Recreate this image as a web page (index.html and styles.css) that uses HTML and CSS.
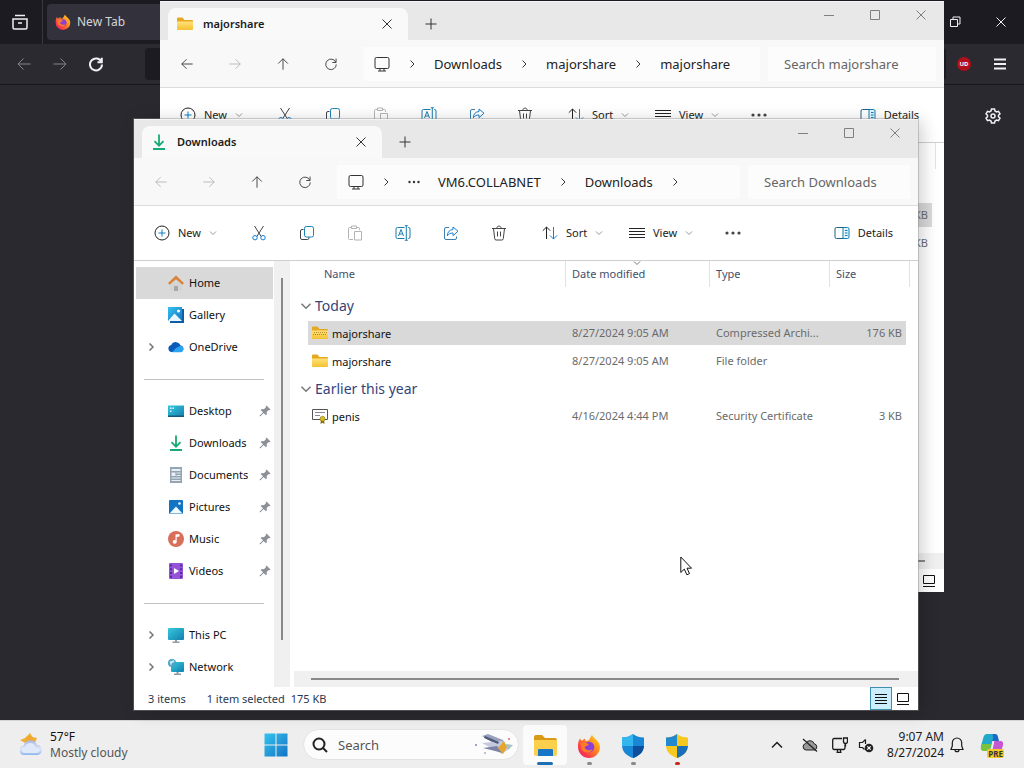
FILE: index.html
```html
<!DOCTYPE html>
<html lang="en">
<head>
<meta charset="utf-8">
<title>Downloads</title>
<link rel="stylesheet" href="styles.css">
</head>
<body>
<svg class="defs" aria-hidden="true">
  <defs>
    <linearGradient id="gFolder" x1="0" y1="0" x2="0" y2="1"><stop offset="0" stop-color="#ffe27a"/><stop offset="1" stop-color="#f5c132"/></linearGradient>
    <linearGradient id="gBlue" x1="0" y1="0" x2="1" y2="1"><stop offset="0" stop-color="#35c3ee"/><stop offset="1" stop-color="#1473c4"/></linearGradient>
    <linearGradient id="gScreen" x1="0" y1="0" x2="1" y2="1"><stop offset="0" stop-color="#37c8dd"/><stop offset="1" stop-color="#117fae"/></linearGradient>
    <linearGradient id="gFox" x1="1" y1="0" x2="0" y2="1"><stop offset="0" stop-color="#ffe226"/><stop offset=".4" stop-color="#ff8a1e"/><stop offset=".75" stop-color="#fb3a4b"/><stop offset="1" stop-color="#e31587"/></linearGradient>
    <linearGradient id="gCloud" x1="0" y1="0" x2="0" y2="1"><stop offset="0" stop-color="#a9b5dc"/><stop offset=".6" stop-color="#dce8fb"/><stop offset="1" stop-color="#8eb4ea"/></linearGradient>
  </defs>
  <symbol id="back" viewBox="0 0 16 16"><path d="M14.500 8H2M7.500 2.500 2 8l5.500 5.500"/></symbol>
  <symbol id="fwd" viewBox="0 0 16 16"><path d="M1.500 8H14M8.500 2.500 14 8l-5.500 5.500"/></symbol>
  <symbol id="up" viewBox="0 0 16 16"><path d="M8 14.500V2M2.500 7.500 8 2l5.500 5.500"/></symbol>
  <symbol id="reload" viewBox="0 0 16 16"><path d="M13.500 6A6 6 0 1 0 14 8.500M13.800 1.800v4.500H9.500"/></symbol>
  <symbol id="pc" viewBox="0 0 16 16"><path d="M2.500 1.500h11a1.500 1.500 0 0 1 1.500 1.500v8a1.500 1.500 0 0 1-1.500 1.500h-11A1.500 1.500 0 0 1 1 11V3a1.500 1.500 0 0 1 1.500-1.500zM6 12.500V15M10 12.500V15M4 15h8"/></symbol>
  <symbol id="right" viewBox="0 0 8 8"><path d="m2.500.500 3.500 3.500-3.500 3.500"/></symbol>
  <symbol id="down" viewBox="0 0 8 8"><path d="m1 2.500 3 3 3-3"/></symbol>
  <symbol id="dots" viewBox="0 0 16 16"><g fill="currentColor" stroke="none"><circle cx="2" cy="8" r="1.600"/><circle cx="8" cy="8" r="1.600"/><circle cx="14" cy="8" r="1.600"/></g></symbol>
  <symbol id="plus" viewBox="0 0 12 12"><path d="M6 .500v11M.500 6h11"/></symbol>
  <symbol id="close" viewBox="0 0 12 12"><path d="m1.500 1.500 9 9M10.500 1.500l-9 9"/></symbol>
  <symbol id="min" viewBox="0 0 12 12"><path d="M1 6.500h10"/></symbol>
  <symbol id="max" viewBox="0 0 12 12"><path d="M1.500 1.500h9v9h-9z"/></symbol>
  <symbol id="new" viewBox="0 0 16 16"><circle cx="8" cy="8" r="7"/><path stroke="#0f7fc4" d="M8 4.500v7M4.500 8h7"/></symbol>
  <symbol id="cut" viewBox="0 0 16 16"><path d="m3.500 1 6.700 10.500M12.500 1 5.800 11.500"/><g stroke="#0f7fd8"><circle cx="4" cy="12.700" r="2.200"/><circle cx="12" cy="12.700" r="2.200"/></g></symbol>
  <symbol id="copy" viewBox="0 0 16 16"><path d="M4.500 4.500H3A1.500 1.500 0 0 0 1.500 6v7A1.500 1.500 0 0 0 3 14.500h5.500A1.500 1.500 0 0 0 10 13v-1"/><rect x="5.500" y="1.500" width="9" height="10.500" rx="1.800" stroke="#1c84bd"/></symbol>
  <symbol id="paste" viewBox="0 0 16 16"><path d="M6 14.500H2.500a1 1 0 0 1-1-1v-10a1 1 0 0 1 1-1H4M10 2.500h1.500a1 1 0 0 1 1 1V5M4.500 1h5v2.500h-5zM7.500 6.500h7v8.500h-7z"/></symbol>
  <symbol id="rename" viewBox="0 0 16 16"><g stroke="#1a7cae"><path d="M9.500 2.500H2.500A1.500 1.500 0 0 0 1 4v8a1.500 1.500 0 0 0 1.500 1.500h7M13 2.500h.5A1.500 1.500 0 0 1 15 4v8a1.500 1.500 0 0 1-1.500 1.500H13M11.300 1v14M9.800.700h3M9.800 15.300h3"/><path d="m3.500 11 2.500-6.500L8.500 11M4.500 9h3"/></g></symbol>
  <symbol id="share" viewBox="0 0 16 16"><path stroke="#3b7fae" d="M6 2.500H3A1.500 1.500 0 0 0 1.500 4v9A1.500 1.500 0 0 0 3 14.500h9a1.500 1.500 0 0 0 1.500-1.500v-1.500"/><path stroke="#1c7fd0" d="M10 2v2.500C6.500 4.800 4.500 7 4.300 10.800 5.800 8.800 7.500 8 10 8v2.700L15 6.200z"/></symbol>
  <symbol id="trash" viewBox="0 0 16 16"><path d="M1 3.500h14M5.800 3.500C5.800.300 10.200.300 10.200 3.500M2.500 3.500l1.200 10a1.500 1.500 0 0 0 1.500 1.500h5.600a1.500 1.500 0 0 0 1.500-1.500l1.200-10M6.500 6.500v5M9.500 6.500v5"/></symbol>
  <symbol id="sort" viewBox="0 0 16 16"><path d="M4.500 14V2M.800 5.700 4.500 2l3.700 3.700"/><path stroke="#1c7fd0" d="M11.500 2v12M8 10.500l3.500 3.500 3.700-3.700"/></symbol>
  <symbol id="lines" viewBox="0 0 16 16"><path d="M0 3.500h16M0 6.500h16M0 9.500h16M0 12.500h16"/></symbol>
  <symbol id="details" viewBox="0 0 16 16"><path stroke="#22607f" d="M10 2.500H2.500A1.500 1.500 0 0 0 1 4v8a1.500 1.500 0 0 0 1.500 1.500H10"/><path fill="#e5f5fd" stroke="#0f7fb4" d="M9 2.500h4.500A1.500 1.500 0 0 1 15 4v8a1.500 1.500 0 0 1-1.500 1.500H9zM11 5.500h2.500M11 8h2.500M11 10.500h2.500"/></symbol>
  <symbol id="download" viewBox="0 0 16 16"><path stroke="#19a974" stroke-width="1.800" d="M8 .500v11M3.500 7.200 8 11.700l4.500-4.500M2 15h12"/></symbol>
  <symbol id="folder" viewBox="0 0 16 16"><g stroke="none"><path fill="#e5a822" d="M0 2.500a1 1 0 0 1 1-1h4.500L7.500 4H15a1 1 0 0 1 1 1v3H0z"/><path fill="url(#gFolder)" d="M0 5.500h16V13a1 1 0 0 1-1 1H1a1 1 0 0 1-1-1z"/></g></symbol>
  <symbol id="zip" viewBox="0 0 16 16"><use href="#folder"/><path stroke="#b88a2e" stroke-width="1" stroke-dasharray="1 1" d="M2 7.500h14"/><path stroke="#9b8450" stroke-width="1" stroke-dasharray="1 1" d="M1 9.500h14"/></symbol>
  <symbol id="cert" viewBox="0 0 16 16"><path fill="#fff" stroke="#555" d="M.500 1.500h15v10H.500z"/><path stroke="#889" d="M3 4.500h10M3 7.500h5"/><path stroke="none" fill="#7b6a10" d="m9 11-.5 5 2-1.200 2 1.200L12 11z"/><circle cx="10.500" cy="10.800" r="2.500" fill="#d8bd20" stroke="#8a7410" stroke-width=".6"/></symbol>
  <symbol id="home" viewBox="0 0 16 16"><g stroke="none"><path fill="#d4d4d4" d="M2 8.500 8 3.500l6 5V15a1 1 0 0 1-1 1h-3v-5H6v5H3a1 1 0 0 1-1-1z"/><path fill="#a7a7a7" d="M6 11h4v5H6z"/><path fill="#d98338" d="M8 .500 0 8l1.500 1.800L8 4.300l6.500 5.500L16 8z"/></g></symbol>
  <symbol id="gallery" viewBox="0 0 16 16"><g stroke="none"><path fill="#0b5da8" d="M2 2h14v14H2z"/><path fill="url(#gBlue)" d="M0 0h14v14H0z"/><path fill="#e8f6ff" d="m0 14 6.500-7.500L14 14z"/><circle cx="10.500" cy="4" r="1.500" fill="#fff"/></g></symbol>
  <symbol id="onedrive" viewBox="0 0 16 16"><g stroke="none"><path fill="#0a5cb8" d="M3.500 13a3.500 3.500 0 0 1-.3-6.900A5 5 0 0 1 12.500 6.500 3.300 3.300 0 0 1 12.800 13z"/><path fill="#2aa3f0" d="M4 13.200 8 9l4.500-2.300A3.300 3.300 0 0 1 12.800 13.200z"/></g></symbol>
  <symbol id="desktop" viewBox="0 0 16 16"><g stroke="none"><path fill="url(#gScreen)" d="M0 2.500h16v11.500H0z"/><path fill="#e4fbff" d="M2 4.500h1.500V6H2zM2 7.500h1.500V9H2zM4.500 4.500H6V6H4.500z"/><path fill="#155a7c" d="M0 12.500h16V14H0z"/></g></symbol>
  <symbol id="document" viewBox="0 0 16 16"><g stroke="none"><path fill="#93a4b3" d="M2 0h12v16H2z"/><path fill="#e9eff4" d="M3.500 2h9v2h-9zM3.500 5.500h4v3.500h-4zM8.500 5.500h4v1h-4zM8.500 8h4v1h-4zM3.500 10.500h9v1h-9zM3.500 13h9v1h-9z"/></g></symbol>
  <symbol id="picture" viewBox="0 0 16 16"><g stroke="none"><rect x="1" y="1" width="14" height="14" rx="1" fill="#1374c4"/><path fill="#f1faff" d="m1.500 14.500 6.500-7 6.500 7z"/><circle cx="11.500" cy="4.500" r="1.300" fill="#e8f7ff"/></g></symbol>
  <symbol id="music" viewBox="0 0 16 16"><g stroke="none"><circle cx="8" cy="8" r="8" fill="#d96f58"/><path fill="#fff" d="M7.500 3.500 11.500 3v2.500l-2.800.5v5A2 1.800 0 1 1 7.500 9.300z"/></g></symbol>
  <symbol id="video" viewBox="0 0 16 16"><g stroke="none"><rect x="1" y="0" width="14" height="16" rx="1" fill="#9553d8"/><path fill="#5a2a9c" d="M2 1.500h2v2H2zM2 5.300h2v2H2zM2 9h2v2H2zM2 12.700h2v2H2zM12 1.500h2v2h-2zM12 5.300h2v2h-2zM12 9h2v2h-2zM12 12.700h2v2h-2z"/><path fill="#fff" d="m6 5 5 3-5 3z"/></g></symbol>
  <symbol id="thispc" viewBox="0 0 16 16"><g stroke="none"><path fill="#8f9ba3" d="M7 12h2v2.500h2.500V16h-7v-1.500H7z"/><rect y="1" width="16" height="12" rx="1" fill="url(#gScreen)"/></g></symbol>
  <symbol id="network" viewBox="0 0 16 16"><g stroke="none"><path fill="#8f9ba3" d="M8.500 12h2v2.500H13V16H6v-1.500h2.500z"/><rect x="3" y="3" width="13" height="10" rx="1" fill="url(#gScreen)"/><circle cx="4" cy="4" r="4" fill="#4aa5c6"/><path fill="#c8ecf5" d="M1.500 2.500c2 0 3-1 4-1.500l1 2-2.500 1-1 3z"/></g></symbol>
  <symbol id="pin" viewBox="0 0 12 12"><path fill="#8b9196" stroke="none" d="m7.500.500 4 4-1 .8-.8-.2-2 2 .2 2.200-1 1-2.200-2.300L1.200 11.500l-.7-.7L4 7.300 1.700 5.100l1-1 2.200.2 2-2-.2-.8z"/></symbol>
  <symbol id="thumbs" viewBox="0 0 12 12"><path stroke="#111" d="M.500.500h11v8H.500zM0 11.500h12"/></symbol>
  <symbol id="listv" viewBox="0 0 12 12"><path stroke="#111" d="M0 1.500h12M0 4.500h12M0 7.500h12M0 10.500h12"/></symbol>
  <symbol id="firefox" viewBox="0 0 24 24"><g stroke="none"><path fill="url(#gFox)" d="M3 4.500 4.500 7 8 4.500 8.500 7l3-.5C13 5 13.500 2.500 15 1c1 3 7.800 5.500 8 12A11 11 0 0 1 1 13C.800 9.500 1.500 6.500 3 4.500z"/><circle cx="12" cy="13" r="5.300" fill="#8a3fd8"/><path fill="#ff7b29" d="M3.500 9.500c3-1.500 5.500-1 8.500.8-1.500 1.700-3.500 1.700-4.500 3 1 3 5 4 8 1.700-.5 4-8 5-11 .5z"/></g></symbol>
</svg>

<main class="desktop">
  <section class="browser" aria-label="Firefox">
    <div class="fx-tabs">
      <button class="fx-view" aria-label="Firefox View"><svg class="ic" viewBox="0 0 16 16" stroke-width="1.500"><path d="M3 1.500h10M1 5h14v8.500a1.500 1.500 0 0 1-1.500 1.500h-11A1.500 1.500 0 0 1 1 13.500zM6 9h4"/></svg></button>
      <button class="fx-tab"><svg class="ic"><use href="#firefox"/></svg>New Tab</button>
      <div class="fx-win">
        <button aria-label="Restore"><svg class="i12" viewBox="0 0 12 12"><path d="M1.500 3.500h7v7h-7zM4 3.500v-2.500h7v7H8.500"/></svg></button>
        <button aria-label="Close browser"><svg class="i12"><use href="#close"/></svg></button>
      </div>
    </div>
    <div class="fx-nav">
      <button class="dim" aria-label="Back"><svg class="ic"><use href="#back"/></svg></button>
      <button class="dim" aria-label="Forward"><svg class="ic"><use href="#fwd"/></svg></button>
      <button aria-label="Reload"><svg class="ic bold"><use href="#reload"/></svg></button>
      <input class="fx-url" aria-label="Address">
      <button class="ublock" aria-label="uBlock"><span>UD</span></button>
      <button aria-label="Menu"><svg class="i12 bold" viewBox="0 0 12 12"><path d="M0 1.500h12M0 6h12M0 10.500h12"/></svg></button>
    </div>
    <button class="fx-gear" aria-label="Settings"><svg class="ic" viewBox="0 0 16 16" stroke-width="1.500"><path d="M6.500 1h3l.5 2 1.500.9 2-.6 1.500 2.600L13.500 7.300v1.400L15 10.100l-1.500 2.600-2-.6L10 13l-.5 2h-3L6 13l-1.500-.9-2 .6L1 10.100l1.500-1.400V7.300L1 5.900l1.500-2.600 2 .6L6 3z"/><circle cx="8" cy="8" r="2"/></svg></button>
  </section>

  <section class="win win-back" aria-label="majorshare">
    <header class="titlebar">
      <div class="tab"><svg class="ic"><use href="#folder"/></svg><span>majorshare</span><button aria-label="Close tab"><svg class="i12"><use href="#close"/></svg></button></div>
      <button class="add" aria-label="New tab"><svg class="i12"><use href="#plus"/></svg></button>
      <div class="caps"><button aria-label="Minimize"><svg class="i12"><use href="#min"/></svg></button><button aria-label="Maximize"><svg class="i12"><use href="#max"/></svg></button><button aria-label="Close"><svg class="i12"><use href="#close"/></svg></button></div>
    </header>
    <nav class="navbar">
      <button aria-label="Back"><svg class="i14"><use href="#back"/></svg></button>
      <button class="off" aria-label="Forward"><svg class="i14"><use href="#fwd"/></svg></button>
      <button aria-label="Up"><svg class="i14"><use href="#up"/></svg></button>
      <button aria-label="Refresh"><svg class="i14"><use href="#reload"/></svg></button>
      <div class="crumbs"><svg class="ic"><use href="#pc"/></svg><svg class="i8"><use href="#right"/></svg><a href="#">Downloads</a><svg class="i8"><use href="#right"/></svg><a href="#">majorshare</a><svg class="i8"><use href="#right"/></svg><a href="#">majorshare</a></div>
      <input class="search" placeholder="Search majorshare" aria-label="Search majorshare">
    </nav>
    <div class="cmds">
      <button class="wide c-new"><svg class="ic"><use href="#new"/></svg>New<svg class="i8"><use href="#down"/></svg></button>
      <button aria-label="Cut"><svg class="ic"><use href="#cut"/></svg></button>
      <button aria-label="Copy"><svg class="ic"><use href="#copy"/></svg></button>
      <button class="off" aria-label="Paste"><svg class="ic"><use href="#paste"/></svg></button>
      <button aria-label="Rename"><svg class="ic"><use href="#rename"/></svg></button>
      <button aria-label="Share"><svg class="ic"><use href="#share"/></svg></button>
      <button aria-label="Delete"><svg class="ic"><use href="#trash"/></svg></button>
      <button class="wide c-sort"><svg class="ic"><use href="#sort"/></svg>Sort<svg class="i8"><use href="#down"/></svg></button>
      <button class="wide c-view"><svg class="ic"><use href="#lines"/></svg>View<svg class="i8"><use href="#down"/></svg></button>
      <button aria-label="More"><svg class="ic"><use href="#dots"/></svg></button>
      <button class="wide c-details"><svg class="ic"><use href="#details"/></svg>Details</button>
    </div>
    <div class="body">
      <div class="main">
        <table class="files">
          <thead><tr><th class="name"></th><th class="date"></th><th class="type"></th><th class="size"></th></tr></thead>
          <tbody>
            <tr class="group"><th colspan="4"></th></tr>
            <tr class="sel"><td></td><td></td><td></td><td>KB</td></tr>
            <tr><td></td><td></td><td></td><td>KB</td></tr>
          </tbody>
        </table>
        <div class="hbar"><i></i></div>
      </div>
    </div>
    <footer class="status"><div class="views"><button aria-label="Large icons"><svg class="i12"><use href="#thumbs"/></svg></button></div></footer>
  </section>

  <section class="win win-front" aria-label="Downloads">
    <header class="titlebar">
      <div class="tab"><svg class="ic"><use href="#download"/></svg><span>Downloads</span><button aria-label="Close tab"><svg class="i12"><use href="#close"/></svg></button></div>
      <button class="add" aria-label="New tab"><svg class="i12"><use href="#plus"/></svg></button>
      <div class="caps"><button aria-label="Minimize"><svg class="i12"><use href="#min"/></svg></button><button aria-label="Maximize"><svg class="i12"><use href="#max"/></svg></button><button aria-label="Close"><svg class="i12"><use href="#close"/></svg></button></div>
    </header>
    <nav class="navbar">
      <button class="off" aria-label="Back"><svg class="i14"><use href="#back"/></svg></button>
      <button class="off" aria-label="Forward"><svg class="i14"><use href="#fwd"/></svg></button>
      <button aria-label="Up"><svg class="i14"><use href="#up"/></svg></button>
      <button aria-label="Refresh"><svg class="i14"><use href="#reload"/></svg></button>
      <div class="crumbs"><svg class="ic"><use href="#pc"/></svg><svg class="i8"><use href="#right"/></svg><svg class="i12"><use href="#dots"/></svg><a href="#">VM6.COLLABNET</a><svg class="i8"><use href="#right"/></svg><a href="#">Downloads</a><svg class="i8"><use href="#right"/></svg></div>
      <input class="search" placeholder="Search Downloads" aria-label="Search Downloads">
    </nav>
    <div class="cmds">
      <button class="wide c-new"><svg class="ic"><use href="#new"/></svg>New<svg class="i8"><use href="#down"/></svg></button>
      <button aria-label="Cut"><svg class="ic"><use href="#cut"/></svg></button>
      <button aria-label="Copy"><svg class="ic"><use href="#copy"/></svg></button>
      <button class="off" aria-label="Paste"><svg class="ic"><use href="#paste"/></svg></button>
      <button aria-label="Rename"><svg class="ic"><use href="#rename"/></svg></button>
      <button aria-label="Share"><svg class="ic"><use href="#share"/></svg></button>
      <button aria-label="Delete"><svg class="ic"><use href="#trash"/></svg></button>
      <button class="wide c-sort"><svg class="ic"><use href="#sort"/></svg>Sort<svg class="i8"><use href="#down"/></svg></button>
      <button class="wide c-view"><svg class="ic"><use href="#lines"/></svg>View<svg class="i8"><use href="#down"/></svg></button>
      <button aria-label="More"><svg class="ic"><use href="#dots"/></svg></button>
      <button class="wide c-details"><svg class="ic"><use href="#details"/></svg>Details</button>
    </div>
    <div class="body">
      <aside class="side">
        <a class="on" href="#"><svg class="ic"><use href="#home"/></svg>Home</a>
        <a href="#"><svg class="ic"><use href="#gallery"/></svg>Gallery</a>
        <a class="tree" href="#"><svg class="i8"><use href="#right"/></svg><svg class="ic"><use href="#onedrive"/></svg>OneDrive</a>
        <hr>
        <a href="#"><svg class="ic"><use href="#desktop"/></svg>Desktop<svg class="pin"><use href="#pin"/></svg></a>
        <a href="#"><svg class="ic"><use href="#download"/></svg>Downloads<svg class="pin"><use href="#pin"/></svg></a>
        <a href="#"><svg class="ic"><use href="#document"/></svg>Documents<svg class="pin"><use href="#pin"/></svg></a>
        <a href="#"><svg class="ic"><use href="#picture"/></svg>Pictures<svg class="pin"><use href="#pin"/></svg></a>
        <a href="#"><svg class="ic"><use href="#music"/></svg>Music<svg class="pin"><use href="#pin"/></svg></a>
        <a href="#"><svg class="ic"><use href="#video"/></svg>Videos<svg class="pin"><use href="#pin"/></svg></a>
        <hr>
        <a class="tree" href="#"><svg class="i8"><use href="#right"/></svg><svg class="ic"><use href="#thispc"/></svg>This PC</a>
        <a class="tree" href="#"><svg class="i8"><use href="#right"/></svg><svg class="ic"><use href="#network"/></svg>Network</a>
      </aside>
      <div class="vbar"><i></i></div>
      <div class="main">
        <table class="files">
          <thead><tr><th class="name">Name</th><th class="date">Date modified<svg class="i8 mark"><use href="#down"/></svg></th><th class="type">Type</th><th class="size">Size</th></tr></thead>
          <tbody>
            <tr class="group"><th colspan="4"><svg class="ic"><use href="#down"/></svg>Today</th></tr>
            <tr class="sel"><td><svg class="ic"><use href="#zip"/></svg>majorshare</td><td>8/27/2024 9:05 AM</td><td>Compressed Archi...</td><td>176 KB</td></tr>
            <tr><td><svg class="ic"><use href="#folder"/></svg>majorshare</td><td>8/27/2024 9:05 AM</td><td>File folder</td><td></td></tr>
            <tr class="group"><th colspan="4"><svg class="ic"><use href="#down"/></svg>Earlier this year</th></tr>
            <tr><td><svg class="ic"><use href="#cert"/></svg>penis</td><td>4/16/2024 4:44 PM</td><td>Security Certificate</td><td>3 KB</td></tr>
          </tbody>
        </table>
        <div class="hbar"><i></i></div>
      </div>
    </div>
    <footer class="status">
      <span class="count">3 items</span><span>1 item selected</span><span>175 KB</span>
      <div class="views"><button class="on" aria-label="Details view"><svg class="i12"><use href="#listv"/></svg></button><button aria-label="Large icons"><svg class="i12"><use href="#thumbs"/></svg></button></div>
    </footer>
  </section>
  <svg class="cursor" viewBox="0 0 13 20"><path fill="#fff" stroke="#111" d="M.800 1v15.500l3.500-3.400 2.600 5.700 2.600-1.200-2.500-5.400h4.500z"/></svg>
</main>

<footer class="taskbar">
  <button class="weather">
    <svg class="i26 flat" viewBox="0 0 26 26"><path fill="#edb13a" d="m12 1 2.500 4L19 6l-2 5H7L2 8l5-2z"/><circle cx="11.500" cy="8.500" r="4.500" fill="#f3a92d"/><path fill="url(#gCloud)" d="M6 23a4.800 4.800 0 0 1-.3-9.500 6.800 6.800 0 0 1 13-.7A5.200 5.200 0 0 1 20 23z"/><path fill="#dfe9fa" d="M6.500 21a3 3 0 0 1 .5-6c1-3 3-4 5.500-4s4.500 2 5 4.500c3 0 4 1.500 4 3s-1 2.500-2.500 2.500z"/></svg>
    <span><b>57°F</b>Mostly cloudy</span>
  </button>
  <div class="apps">
    <button aria-label="Start"><svg class="i24 flat" viewBox="0 0 24 24"><path fill="url(#gBlue)" d="M.500.500h11v11H.500zM12.500.500h11v11h-11zM.500 12.500h11v11H.500zM12.500 12.500h11v11h-11z"/></svg></button>
    <label class="tsearch"><svg class="ic bold" viewBox="0 0 16 16"><circle cx="7" cy="7" r="5.500"/><path d="m11 11 4 4"/></svg><input placeholder="Search" aria-label="Search">
      <svg class="ship flat" viewBox="0 0 42 24"><path fill="#9aa1bf" d="m9 3 6-2 15 6 2 5-7 1z"/><path fill="#c3cade" d="m9 10 20-2 8 7-8 6-9-5z"/><path fill="#7d83a6" d="m10 15 14-2 6 7z"/><path fill="#4f5878" d="m12 3 14 6-1 2L11 5z"/><path fill="#e7a52e" d="m25 15 6-7 3 6-4 7z"/><path fill="#a4c5bd" d="m33 11 7 1-5 5z"/><circle cx="3" cy="12" r="1" fill="#8d7fb7"/><circle cx="36" cy="6" r="1" fill="#d36a7a"/><circle cx="12" cy="20" r="1" fill="#b9a7cb"/></svg></label>
    <button class="app act" aria-label="File Explorer"><svg class="i24 flat" viewBox="0 0 24 24"><path fill="#d99a17" d="M1 3a2 2 0 0 1 2-2h6l3 3h10a2 2 0 0 1 2 2v4H1z"/><path fill="#fcd04c" d="M1 6h23v14a2 2 0 0 1-2 2H3a2 2 0 0 1-2-2z"/><path fill="#1976c5" d="M6 15h13a1 1 0 0 1 1 1v6H5v-6a1 1 0 0 1 1-1z"/></svg><i></i></button>
    <button class="app" aria-label="Firefox"><svg class="i24"><use href="#firefox"/></svg><i></i></button>
    <button class="app" aria-label="Windows Security"><svg class="i24 flat" viewBox="0 0 24 24"><path fill="#1a87d6" d="M12 0c3 2.500 7 3.500 11 3.500V11c0 7-5 11-11 13C6 22 1 18 1 11V3.500C5 3.500 9 2.500 12 0z"/><path fill="#35b5ee" d="M12 0v12H1V3.500C5 3.500 9 2.500 12 0z"/><path fill="#0d4f9c" d="M12 12h11c-.5 6.500-5.500 10-11 12z"/></svg><i></i></button>
    <button class="app alert" aria-label="Permission prompt"><svg class="i24 flat" viewBox="0 0 24 24"><path fill="#f9c81f" d="M12 0c3 2.500 7 3.500 11 3.500V11c0 7-5 11-11 13C6 22 1 18 1 11V3.500C5 3.500 9 2.500 12 0z"/><path fill="#2389cf" d="M12 0v12H1V3.500C5 3.500 9 2.500 12 0z"/><path fill="#1a6fba" d="M12 12h11c-.5 6.500-5.500 10-11 12z"/></svg><i></i></button>
  </div>
  <div class="tray">
    <button class="t-more" aria-label="Hidden icons"><svg class="i12 mid" viewBox="0 0 12 12"><path d="m1 8.500 5-5 5 5"/></svg></button>
    <button class="t-cloud" aria-label="OneDrive"><svg class="ic" viewBox="0 0 16 16"><path fill="#999" stroke="#222" d="M4 13a3.300 3.300 0 0 1-.3-6.500 4.600 4.600 0 0 1 8.600.3A3.200 3.200 0 0 1 12.500 13z"/><path stroke="#222" stroke-width="1.300" d="m1 2 14 12.500"/></svg></button>
    <button aria-label="Network"><svg class="ic" viewBox="0 0 16 16" stroke-width="1.300"><path d="M10 1.500H2A1.500 1.500 0 0 0 .700 3v8A1.500 1.500 0 0 0 2 12.500h9.500A1.500 1.500 0 0 0 13 11V7M4.500 15.300h5M5.500 12.500v2.800M8.500 12.500v2.800M11.500 1h4v3.500a2 2 0 0 1-4 0zM13.500 6.500v3"/></svg></button>
    <button aria-label="Volume muted"><svg class="ic" viewBox="0 0 16 16" stroke-width="1.200"><path d="M7.500 2.500 4.500 5.500H1.500v5h3l2 2M7.500 2.500V7"/><circle cx="11" cy="11" r="4.300" fill="#222" stroke="none"/><path stroke="#fff" d="m9.300 9.300 3.400 3.400M12.700 9.300l-3.400 3.400"/></svg></button>
    <div class="clock"><span>9:07 AM</span><span>8/27/2024</span></div>
    <button aria-label="Notifications"><svg class="ic" viewBox="0 0 16 16" stroke-width="1.200"><path d="M8 1a4.700 4.700 0 0 0-4.700 4.700V9L2 12.500h12L12.700 9V5.700A4.700 4.700 0 0 0 8 1zM6 12.700a2 2 0 0 0 4 0"/></svg></button>
    <button class="copilot" aria-label="Copilot"><svg class="i24 flat" viewBox="0 0 24 24"><path fill="#1b68c8" d="M7 1h8c2 0 2.500 1 3 3l1 4H12z"/><path fill="#22a9c9" d="M7 1h4c2 0 2.500 1.500 2 4l-2 9c-.5 2-1.500 3-4 3H4c-3 0-3.500-2-3-4L3.500 4C4.300 2 5 1 7 1z"/><path fill="#7ac13d" d="M2 11h9l-.5 4c-.5 2-1.500 3-4 3H4c-3 0-3.500-2-3-4z"/><path fill="#c657d3" d="M15 8h5c3 0 3.500 2 3 4l-2 7h-9l2-9c.3-1.500 0-2 1-2z"/></svg><b>PRE</b></button>
  </div>
</footer>
</body>
</html>
```

FILE: styles.css
```css
* { box-sizing: border-box; }

body {
  margin: 0;
  height: 100vh;
  display: flex;
  flex-direction: column;
  overflow: hidden;
  background: #2a292f;
  color: #1b1b1b;
  font: 12px/16px "Noto Sans", "Open Sans", sans-serif;
}

button, input { font: inherit; color: inherit; background: none; border: 0; padding: 0; min-width: 0; }
button { display: flex; align-items: center; justify-content: center; }
a { color: inherit; text-decoration: none; }

svg { flex: none; display: block; fill: none; stroke: currentColor; }
.flat { stroke: none; }
.defs { position: absolute; width: 0; height: 0; }
.i8 { width: 8px; height: 8px; }
.i12 { width: 12px; height: 12px; }
.i14 { width: 14px; height: 14px; }
.ic { width: 16px; height: 16px; }
.i24 { width: 24px; height: 24px; }
.i26 { width: 26px; height: 26px; }
.mid { stroke-width: 1.500; }
.bold { stroke-width: 2; }

.desktop { flex: 1; position: relative; min-height: 0; }

/* Browser behind the windows */
.browser { height: 100%; color: #f0f0f4; background: #2a292f; }
.fx-tabs { height: 44px; display: flex; align-items: center; background: #1c1b21; }
.fx-view { width: 43px; height: 44px; padding-right: 3px; border-right: 1px solid #39383f; }
.fx-tab { width: 200px; height: 36px; margin-left: 4px; padding-left: 8px; justify-content: flex-start; gap: 6px; border-radius: 4px; background: #33323c; color: #d5d5da; }
.fx-win { margin-left: auto; display: flex; }
.fx-win button { width: 46px; height: 44px; }
.fx-nav { height: 41px; display: flex; align-items: center; padding: 0 6px; border-bottom: 1px solid #18171c; background: #2b2a30; }
.fx-nav button { width: 36px; height: 32px; }
.fx-nav .dim { color: #85848a; }
.fx-url { flex: 1; height: 32px; margin-left: 31px; border-radius: 4px; background: #1c1b21; }
.fx-nav .ublock span { width: 14px; height: 14px; border-radius: 7px; background: #b00f1c; color: #fff; font-size: 6px; font-weight: 700; line-height: 14px; text-align: center; }
.fx-gear { margin: 23px 23px 0 auto; }

/* Explorer windows */
.win { position: absolute; display: flex; flex-direction: column; background: #fff; font-size: 11px; }
.win-back { left: 160px; right: 80px; top: 1px; bottom: 128px; }
.win-front { left: 134px; right: 106px; top: 119px; bottom: 10px; box-shadow: 0 0 0 1px #8a8a8a66, 4px 2px 16px #0003; }

.titlebar { height: 39px; display: flex; align-items: flex-end; padding-left: 8px; background: #e8e8e8; border-top: 1px solid #f4f4f4; }
.tab { width: 240px; height: 32px; display: flex; align-items: center; padding: 0 15px 0 9px; border-radius: 8px 8px 0 0; background: #f9f9f9; font-weight: 600; }
.tab span { flex: 1; padding-left: 10px; }
.tab button, .add { color: #333; }
.add { width: 45px; height: 32px; }
.caps { margin-left: auto; align-self: flex-start; display: flex; color: #808080; }
.caps button { width: 46px; height: 26px; }

.navbar { height: 48px; display: flex; align-items: center; padding: 0 8px 0 3px; background: #f8f8f8; border-bottom: 1px solid #dcdcdc; font-size: 13px; }
.navbar > button { width: 48px; height: 32px; color: #333; }
.win .off { color: #b4b4b4; }
.crumbs { flex: 1; height: 34px; display: flex; align-items: center; gap: 18px; margin-left: 8px; padding-left: 11px; background: #fcfcfc; color: #222; }
.crumbs svg { color: #333; }
.search { width: 162px; height: 34px; margin-left: 8px; padding-left: 16px; background: #fcfcfc; }
.win-back .search { width: 168px; }
.search::placeholder { color: #666; opacity: 1; }

.cmds { height: 55px; display: flex; align-items: center; padding: 0 25px 0 20px; border-bottom: 1px solid #cfcfcf; background: #fff; }
.cmds button { width: 48px; height: 32px; color: #444; }
.cmds .wide { justify-content: flex-start; gap: 8px; color: #222; }
.wide .i8 { color: #999; }
.cmds .c-new { width: 81px; }
.cmds .c-sort { width: 87px; margin-left: 19px; }
.cmds .c-view { width: 80px; }
.cmds .c-details { width: auto; margin-left: auto; }

.body { flex: 1; min-height: 0; display: flex; }
.side { width: 140px; padding: 6px 1px 0 2px; }
.side a { height: 32px; display: flex; align-items: center; gap: 5px; padding: 0 2px 0 32px; color: #111; }
.side .on { background: #d9d9d9; }
.side .tree { padding-left: 11px; }
.tree .i8 { margin-right: 8px; color: #777; stroke-width: 1.500; }
.side hr { height: 1px; margin: 16px 9px 15px 8px; border: 0; background: #c0c0c0; }
.pin { width: 12px; height: 12px; margin-left: auto; }
.vbar { width: 16px; padding: 17px 7px 47px; background: #f0f0f0; }
.vbar i { display: block; height: 100%; background: #888; }

.main { flex: 1; min-width: 0; display: flex; flex-direction: column; }
.files { width: calc(100% - 8px); margin-right: 8px; table-layout: fixed; border-spacing: 0; }
.files th { font-weight: 400; text-align: left; padding: 0; }
.files thead th { position: relative; height: 26px; padding: 0 0 0 6px; border-right: 1px solid #e2e2e2; color: #44506b; }
.files thead .name { padding-left: 34px; }
.date { width: 144px; }
.type { width: 120px; }
.size { width: 80px; }
.mark { position: absolute; left: 67px; top: -2px; color: #777; }
.files .group th { height: 27px; color: #34447a; font-size: 14px; }
.files thead + tbody::before { content: ""; display: block; height: 5px; }
.group .ic { display: inline-block; width: 12px; height: 12px; margin: 0 3px 0 10px; vertical-align: -1px; color: #777; stroke-width: 1px; }
.files td { height: 28px; padding: 0 6px; border: 2px solid transparent; border-width: 2px 0; background-clip: padding-box; white-space: nowrap; overflow: hidden; text-overflow: ellipsis; color: #6b6b6b; }
.files td:first-child { padding-left: 4px; border-left-width: 18px; color: #111; }
.files td:last-child { padding-right: 4px; border-right-width: 4px; text-align: right; }
.files td .ic { display: inline-block; margin-right: 4px; vertical-align: -3px; }
.sel td { background-color: #d9d9d9; }
.hbar { height: 16px; margin: auto 0 0 4px; padding: 7px 19px 7px 17px; background: #f0f0f0; }
.hbar i { display: block; height: 2px; background: #888; }

.status { height: 23px; display: flex; align-items: center; gap: 6px; padding: 0 4px 0 14px; color: #2b3950; }
.count { margin-right: 15px; }
.views { margin-left: auto; display: flex; }
.views button { width: 22px; height: 23px; }
.views .on { border: 1px solid #3f8fae; background: #cceefc; }

.cursor { position: absolute; left: 680px; top: 556px; width: 13px; height: 20px; }

/* Taskbar */
.taskbar { height: 48px; display: grid; grid-template-columns: 254px auto 1fr; align-items: center; background: #eee; border-top: 1px solid #d4d4d4; }
.weather { justify-self: start; margin-left: 18px; gap: 6px; color: #555; text-align: left; }
.weather b { display: block; color: #111; font-weight: 400; }
.apps { display: flex; align-items: center; height: 47px; }
.apps > button { width: 44px; height: 40px; }
.tsearch { width: 216px; height: 31px; display: flex; align-items: center; gap: 10px; margin: 0 4px 0 5px; padding: 0 3px 0 8px; border-radius: 16px; background: #fcfcfc; border: 1px solid #e3e3e3; color: #222; font-size: 13px; }
.tsearch input { flex: 1; }
.tsearch input::placeholder { color: #555; opacity: 1; }
.ship { width: 42px; height: 24px; }
.apps .app { flex-direction: column; justify-content: flex-end; gap: 4px; }
.app i { width: 5px; height: 3px; border-radius: 2px; background: #8a8a8a; }
.app.act { background: #fbfbfb; border-radius: 4px; }
.act i { width: 16px; background: #1c6fb5; }
.alert i { background: #c42b1c; }
.tray { justify-self: end; display: flex; align-items: center; padding-right: 10px; }
.tray button { width: 26px; height: 32px; }
.tray .t-more { width: 32px; }
.tray .t-cloud { width: 34px; }
.clock { display: flex; flex-direction: column; text-align: right; margin-left: 8px; }
.tray .copilot { position: relative; width: 44px; }
.copilot b { position: absolute; right: 10px; bottom: 3px; padding: 0 1px; border-radius: 2px; background: #f6c92f; color: #333; font-size: 8px; line-height: 9px; }
```
